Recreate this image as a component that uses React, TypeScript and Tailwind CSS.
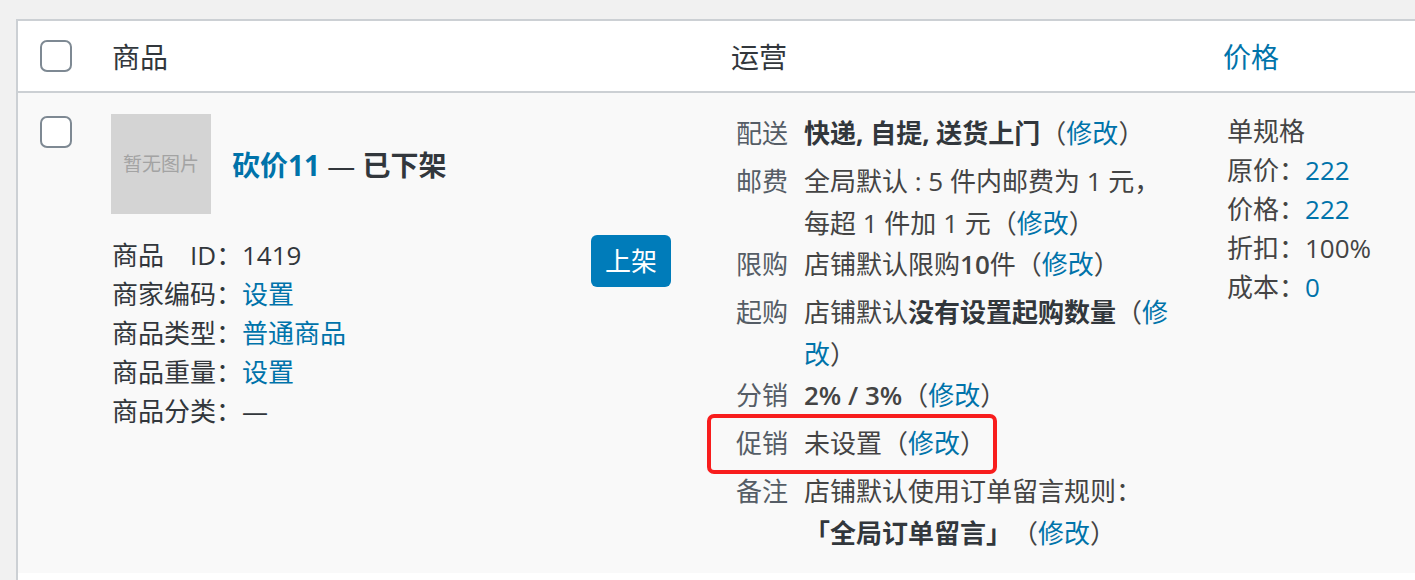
import React from "react";

const Checkbox = () => (
  <div className="w-[32px] h-[32px] rounded-[7px] border-2 border-[#7e8993] bg-white" />
);

const Link = ({ children }: { children: React.ReactNode }) => (
  <span className="text-[#0073aa]">{children}</span>
);

const Edit = () => (
  <span>
    （<Link>修改</Link>）
  </span>
);

const OpsItem = ({
  label,
  children,
  extra,
}: {
  label: string;
  children: React.ReactNode;
  extra?: React.ReactNode;
}) => (
  <div className="relative flex min-h-[48px] leading-[41.5px]">
    {extra}
    <div className="w-[68px] shrink-0 text-[#555d66]">{label}</div>
    <div className="flex-1 text-[#444]">{children}</div>
  </div>
);

const MetaLine = ({ label, children }: { label: string; children: React.ReactNode }) => (
  <div className="flex whitespace-nowrap">
    <span className="inline-block w-[130px]">{label}</span>
    <span>{children}</span>
  </div>
);

export default function App() {
  return (
    <div className="w-[1415px] h-[580px] overflow-hidden bg-[#f1f1f1] font-['Open_Sans','Noto_Sans_CJK_SC',sans-serif] [text-spacing-trim:space-all]">
      <div className="ml-[16px] mt-[19px] w-[1520px] border-l-2 border-t-2 border-[#ccd0d4] bg-white">
        {/* header */}
        <div className="flex h-[72px] items-center border-b-2 border-[#ccd0d4] text-[28px] leading-[39px] text-[#32373c]">
          <div className="w-[74px] shrink-0 pl-[22px]">
            <Checkbox />
          </div>
          <div className="w-[619px] shrink-0 pl-[20px] pt-[3px]">商品</div>
          <div className="w-[492px] shrink-0 pl-[20px] pt-[3px]">运营</div>
          <div className="flex-1 pl-[20px] pt-[3px] text-[#0073aa]">价格</div>
        </div>

        {/* body row */}
        <div className="flex items-start bg-[#f9f9f9] text-[26px] leading-[39px] text-[#444]">
          <div className="w-[74px] shrink-0 pl-[22px] pt-[23px]">
            <Checkbox />
          </div>

          <div className="w-[619px] shrink-0 pl-[19px] pr-[20px] pt-[21px]">
            <div className="flex items-center gap-[21px]">
              <div className="flex h-[100px] w-[100px] items-center justify-center bg-[#d4d4d4] text-[19px] text-[#a3a3a3]">
                暂无图片
              </div>
              <div className="pt-[2px] text-[28px] font-bold text-[#32373c]">
                <span className="text-[#0073aa]">砍价11</span>
                <span className="font-normal"> — </span>已下架
              </div>
            </div>
            <div className="mt-[21px] flex items-start justify-between">
              <div className="pl-[1px] pt-[1px] text-[#32373c]">
                <MetaLine label="商品　ID：">1419</MetaLine>
                <MetaLine label="商家编码：">
                  <Link>设置</Link>
                </MetaLine>
                <MetaLine label="商品类型：">
                  <Link>普通商品</Link>
                </MetaLine>
                <MetaLine label="商品重量：">
                  <Link>设置</Link>
                </MetaLine>
                <MetaLine label="商品分类：">—</MetaLine>
              </div>
              <button className="mr-[20px] flex h-[52px] w-[80px] items-center justify-center rounded-[6px] bg-[#007cba] text-[26px] text-white">
                上架
              </button>
            </div>
          </div>

          <div className="w-[492px] shrink-0 pl-[25px] pr-[20px] pt-[20px] pb-[19px]">
            <OpsItem label="配送">
              <span className="font-bold text-[#32373c]">快递, 自提, 送货上门</span>
              <Edit />
            </OpsItem>
            <OpsItem label="邮费">
              全局默认 : 5 件内邮费为 1 元，
              <br />
              每超 1 件加 1 元<Edit />
            </OpsItem>
            <OpsItem label="限购">
              店铺默认限购<span className="font-semibold">10</span>件<Edit />
            </OpsItem>
            <OpsItem label="起购">
              店铺默认<span className="font-bold text-[#32373c]">没有设置起购数量</span>（<Link>修</Link>
              <br />
              <Link>改</Link>）
            </OpsItem>
            <OpsItem label="分销">
              <span className="font-semibold">2% / 3%</span>
              <Edit />
            </OpsItem>
            <OpsItem
              label="促销"
              extra={
                <div className="pointer-events-none absolute left-[-29px] top-[-9px] h-[60px] w-[290px] rounded-[7px] border-4 border-[#f81d1d]" />
              }
            >
              未设置<Edit />
            </OpsItem>
            <OpsItem label="备注">
              店铺默认使用订单留言规则：
              <br />
              <span className="font-bold text-[#32373c]">「全局订单留言」</span>
              <Edit />
            </OpsItem>
          </div>

          <div className="flex-1 pl-[24px] pt-[19px] text-[#444]">
            <div>单规格</div>
            <div>
              原价：<Link>222</Link>
            </div>
            <div>
              价格：<Link>222</Link>
            </div>
            <div>折扣：100%</div>
            <div>
              成本：<Link>0</Link>
            </div>
          </div>
        </div>

        <div className="h-[40px] bg-white" />
      </div>
    </div>
  );
}
